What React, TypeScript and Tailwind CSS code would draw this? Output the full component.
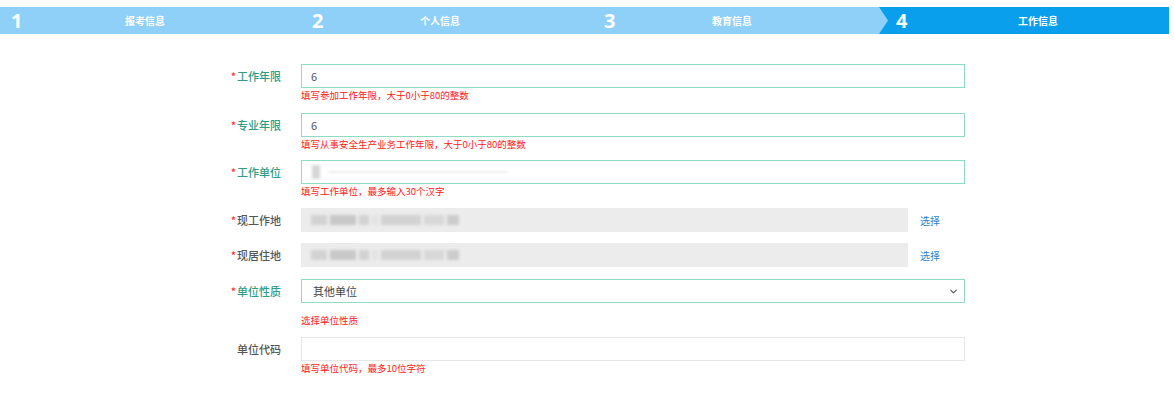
import { ChevronDown } from "lucide-react";

const steps = [
  { n: "1", label: "报考信息", center: 145 },
  { n: "2", label: "个人信息", center: 148 },
  { n: "3", label: "教育信息", center: 148 },
  { n: "4", label: "工作信息", center: 162, active: true },
];

const font = { fontFamily: '"Noto Sans CJK SC", "Noto Sans", sans-serif' };

function Label({ text, required, green }: { text: string; required?: boolean; green?: boolean }) {
  return (
    <div className="flex w-[281px] shrink-0 items-center justify-end text-[11px] font-medium">
      {required && <span className="mr-[1px] text-[#ff2d2d]">*</span>}
      <span className={green ? "text-[#2f9c83]" : "text-[#555]"}>{text}</span>
    </div>
  );
}

function Help({ text, className = "" }: { text: string; className?: string }) {
  return (
    <div className={"pl-[301px] text-[9.5px] leading-[14px] text-[#ff2020] " + className}>{text}</div>
  );
}

function Blur({ w, shade = "bg-[#d2d2d2]" }: { w: number; shade?: string }) {
  return <div className={"h-[10px] blur-[1.5px] " + shade} style={{ width: w }} />;
}

function Redacted() {
  return (
    <>
      <Blur w={16} />
      <Blur w={26} shade="bg-[#c8c8c8]" />
      <Blur w={10} />
      <Blur w={6} shade="bg-[#e2e2e2]" />
      <Blur w={40} />
      <Blur w={20} shade="bg-[#d8d8d8]" />
      <Blur w={12} shade="bg-[#cccccc]" />
    </>
  );
}

export default function App() {
  return (
    <div className="h-[420px] w-[1174px] overflow-hidden bg-white" style={font}>
      {/* step bar */}
      <div className="mt-[7px] flex h-[27px] w-[1169px] bg-[#8fd0f8] text-white">
        {steps.map((s) => (
          <div
            key={s.n}
            className={"relative flex items-center " + (s.active ? "w-[293px] bg-[#0a9fec]" : "w-[292px]")}
          >
            {s.active && (
              <svg className="absolute left-0 top-0" width="14" height="27" viewBox="0 0 14 27">
                <polygon points="0,0 3,0 12,13.5 3,27 0,27" fill="#8fd0f8" />
              </svg>
            )}
            <span
              className={"text-[20px] font-bold " + (s.n === "1" ? "ml-[11px]" : "ml-[20px]")}
              style={{ fontFamily: '"Open Sans", sans-serif' }}
            >
              {s.n}
            </span>
            <span
              className="absolute w-[80px] -translate-x-1/2 text-center text-[10px] font-bold"
              style={{ left: s.center }}
            >
              {s.label}
            </span>
          </div>
        ))}
      </div>

      {/* form */}
      <div className="mt-[30px] flex items-center gap-5">
        <Label text="工作年限" required green />
        <div className="flex h-[24px] w-[664px] items-center border border-[#8fdcc3] px-[9px] text-[11px] text-[#555]">6</div>
      </div>
      <Help text="填写参加工作年限，大于0小于80的整数" />

      <div className="mt-[11px] flex items-center gap-5">
        <Label text="专业年限" required green />
        <div className="flex h-[24px] w-[664px] items-center border border-[#8fdcc3] px-[9px] text-[11px] text-[#555]">6</div>
      </div>
      <Help text="填写从事安全生产业务工作年限，大于0小于80的整数" />

      <div className="mt-[9px] flex items-center gap-5">
        <Label text="工作单位" required green />
        <div className="flex h-[24px] w-[664px] items-center gap-2 border border-[#8fdcc3] px-[10px]">
          <div className="h-[14px] w-[8px] bg-[#d6d6d6] blur-[1.5px]" />
          <div className="h-[2px] w-[180px] bg-[#eeeeee] blur-[1px]" />
        </div>
      </div>
      <Help text="填写工作单位，最多输入30个汉字" />

      <div className="mt-[10px] flex items-center gap-5">
        <Label text="现工作地" required />
        <div className="flex h-[24px] w-[607px] items-center gap-[3px] bg-[#ececec] px-[10px]">
          <Redacted />
        </div>
        <span className="ml-[-8px] text-[10px] text-[#2e7fd1]">选择</span>
      </div>

      <div className="mt-[11px] flex items-center gap-5">
        <Label text="现居住地" required />
        <div className="flex h-[24px] w-[607px] items-center gap-[3px] bg-[#ececec] px-[10px]">
          <Redacted />
        </div>
        <span className="ml-[-8px] text-[10px] text-[#2e7fd1]">选择</span>
      </div>

      <div className="mt-[12px] flex items-center gap-5">
        <Label text="单位性质" required green />
        <div className="flex h-[24px] w-[664px] items-center justify-between border border-[#8fdcc3] pl-[11px] pr-[5px] text-[11px] text-[#444]">
          <span>其他单位</span>
          <ChevronDown size={11} strokeWidth={2.5} className="text-[#555]" />
        </div>
      </div>
      <Help text="选择单位性质" className="mt-[10px]" />

      <div className="mt-[10px] flex items-center gap-5">
        <Label text="单位代码" />
        <div className="h-[24px] w-[664px] border border-[#e6e6e6]" />
      </div>
      <Help text="填写单位代码，最多10位字符" />
    </div>
  );
}
